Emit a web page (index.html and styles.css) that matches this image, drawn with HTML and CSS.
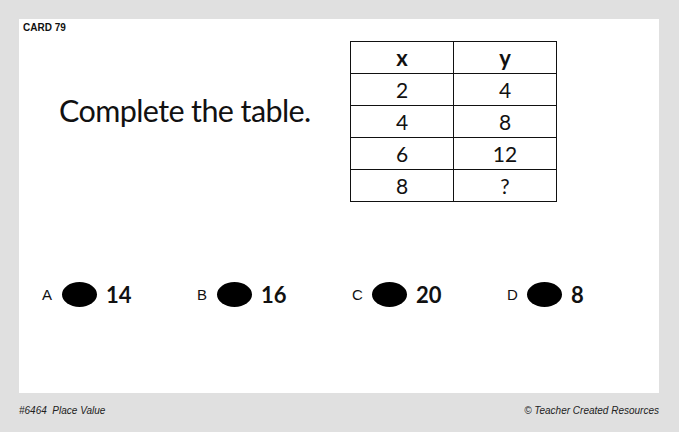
FILE: index.html
```html
<!DOCTYPE html>
<html>
<head>
<meta charset="utf-8">
<link rel="stylesheet" href="styles.css">
</head>
<body>
<div class="page">
  <div class="card">
    <div class="card-label">CARD 79</div>
    <div class="top">
      <div class="question">Complete the table.</div>
      <table class="xy">
        <tr><th>x</th><th>y</th></tr>
        <tr><td>2</td><td>4</td></tr>
        <tr><td>4</td><td>8</td></tr>
        <tr><td>6</td><td>12</td></tr>
        <tr><td>8</td><td>?</td></tr>
      </table>
    </div>
    <div class="answers">
      <div class="answer"><span class="letter">A</span><span class="oval"></span><span class="num">14</span></div>
      <div class="answer"><span class="letter">B</span><span class="oval"></span><span class="num">16</span></div>
      <div class="answer"><span class="letter">C</span><span class="oval"></span><span class="num">20</span></div>
      <div class="answer"><span class="letter">D</span><span class="oval"></span><span class="num">8</span></div>
    </div>
  </div>
  <div class="footer">
    <span>#6464&nbsp; Place Value</span>
    <span>© Teacher Created Resources</span>
  </div>
</div>
</body>
</html>
```
FILE: styles.css
```css
html, body {
  margin: 0;
  padding: 0;
  background: #e0e0e0;
}
.page {
  width: 679px;
  height: 432px;
  box-sizing: border-box;
  padding: 19px 20px 0 19px;
  display: flex;
  flex-direction: column;
}
.card {
  background: #fff;
  width: 640px;
  height: 374px;
  box-sizing: border-box;
  padding: 3px 0 0 4px;
  display: flex;
  flex-direction: column;
}
.card-label {
  font-family: "Liberation Sans", Arial, sans-serif;
  font-weight: bold;
  font-size: 10px;
  line-height: 12px;
  color: #111;
}
.top {
  display: flex;
  align-items: flex-start;
  margin-top: 7px;
}
.question {
  font-family: "Lato", "Noto Sans", sans-serif;
  font-size: 30.5px;
  letter-spacing: -0.6px;
  line-height: 40px;
  color: #111;
  margin: 49px 0 0 36px;
  width: 291px;
}
.xy {
  border-collapse: collapse;
  width: 207px;
  font-family: "Lato", "Noto Sans", sans-serif;
  color: #111;
}
.xy th, .xy td {
  border: 1.5px solid #111;
  height: 31px;
  padding: 0;
  text-align: center;
  font-size: 21px;
  font-weight: normal;
  width: 50%;
}
.xy th {
  font-weight: bold;
  font-size: 22px;
}
.answers {
  display: grid;
  grid-template-columns: repeat(4, 155px);
  margin: 79px 0 0 19px;
}
.answer {
  display: flex;
  align-items: center;
}
.letter {
  font-family: "Liberation Sans", Arial, sans-serif;
  font-size: 15px;
  color: #111;
  width: 20px;
}
.oval {
  width: 35px;
  height: 25px;
  border-radius: 50%;
  background: #000;
  margin-right: 9px;
}
.num {
  font-family: "Lato", "Open Sans", sans-serif;
  font-weight: bold;
  font-size: 22px;
  color: #111;
}
.footer {
  display: flex;
  justify-content: space-between;
  font-family: "Liberation Sans", Arial, sans-serif;
  font-style: italic;
  font-size: 10px;
  color: #222;
  padding-top: 12px;
}
```
